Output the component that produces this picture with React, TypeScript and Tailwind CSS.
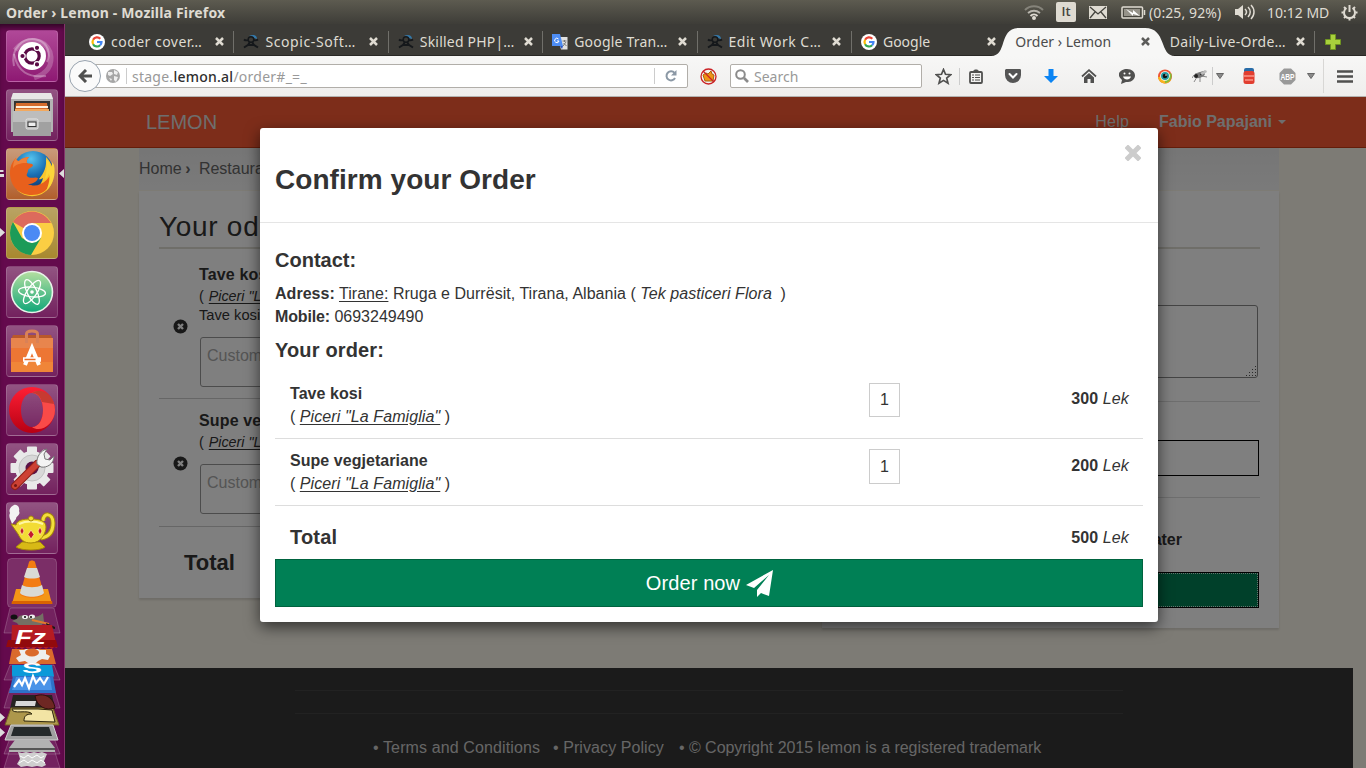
import type { ReactNode } from 'react';

const UI = "font-['Noto_Sans',sans-serif]";

/* ---------- Launcher ---------- */

function Tile({ children, tint = 'from-white/30 to-white/10' }: { children: ReactNode; tint?: string }) {
  return (
    <div className={`h-[52px] w-[52px] shrink-0 overflow-hidden rounded-[4px] border border-white/15 bg-linear-to-b ${tint}`}>
      <svg viewBox="0 0 52 52" className="-m-px h-[52px] w-[52px]">{children}</svg>
    </div>
  );
}

function Launcher() {
  return (
    <aside className="relative flex w-[65px] shrink-0 flex-col items-start gap-[7px] overflow-hidden border-r border-[#84336b] bg-[#640a4d] pt-[6px] pl-[6px] shadow-[inset_0_5px_5px_-2px_rgba(0,0,0,0.5)]">
      <Tile tint="from-[#b04898] to-[#8e1873]">
        <path d="M8 36C4 18 18 6 32 10c10 3 13 14 9 22" fill="none" stroke="#fff" strokeOpacity=".3" strokeWidth="2" />
        <path d="M9 20C20 6 38 8 44 22c4 14-4 22-16 26" fill="none" stroke="#fff" strokeOpacity=".22" strokeWidth="5" />
        <path d="M8 24c4 18 14 24 32 22" fill="none" stroke="#fff" strokeOpacity=".3" strokeWidth="2" />
        <circle cx="26" cy="26" r="14" fill="#fff" />
        <circle cx="26" cy="26" r="7.2" fill="none" stroke="#5a0a45" strokeWidth="3.2" />
        <g fill="#5a0a45" stroke="#fff" strokeWidth="1.2"><circle cx="16.5" cy="26" r="2.7" /><circle cx="31" cy="17.8" r="2.7" /><circle cx="31" cy="34.4" r="2.7" /></g>
      </Tile>
      <Tile>
        <path d="M7 4h38l2 6v33H5V10z" fill="#b4b4b4" /><path d="M7 4h38l2 6H5z" fill="#e8e8e6" />
        <path d="M8 12h36v10H8z" fill="#333" /><path d="M10 14h31l1 8H9z" fill="#d56c2c" /><path d="M10 17h32v2H10z" fill="#fff1df" /><path d="M9 20h34v2H9z" fill="#f2a95f" />
        <path d="M7 22h38v25H7z" fill="#a1a1a1" /><path d="M7 22h38v11H7z" fill="#bdbdbd" />
        <rect x="20" y="30" width="12" height="10" rx="1.5" fill="#bbb" stroke="#e5e5e5" /><rect x="22" y="33" width="8" height="4.5" fill="#eee" stroke="#333" />
      </Tile>
      <Tile tint="from-[#c99b7a] to-[#b15f2c]">
        <defs><radialGradient id="globe" cx=".45" cy=".2" r=".8"><stop stopColor="#55c3ee" /><stop offset=".5" stopColor="#1a6fb3" /><stop offset="1" stopColor="#0a2f66" /></radialGradient></defs>
        <circle cx="27" cy="23" r="20" fill="url(#globe)" />
        <path d="M40 9c10 10 10 26 0 34-6 6-20 8-29-1 16 4 24-3 26-12-3 2-4 1-4 1 5-6 8-12 7-22z" fill="#f9c52c" />
        <path d="M47 18c3 16-6 29-21 29C12 47 4 37 4 25c0-8 3-12 6-15 0 2 1 3 3 3 3-3 7-4 10-4-2 2-3 4-2 6 2 1 5 0 6 2 0 2-4 3-5 5 0 3-2 4-1 6 4 4 8 0 11 2-1 4-6 6-10 6 10 5 23-3 25-18z" fill="#e8601c" />
        <path d="M48 17c2 10-1 20-8 26 3-7 4-12 3-18-1 3-2 5-4 6 2-8 2-14 1-20 3 3 4 5 5 8 1-1 1-2 1-5z" fill="#fbd53a" />
        <path d="M10 10c0 2 1 3 3 3 3-3 7-4 10-4-2 2-3 4-2 6-4 0-10 0-14 5 0-4 1-8 3-10z" fill="#f08038" />
      </Tile>
      <Tile tint="from-[#b9a363] to-[#a8892e]">
        <circle cx="26" cy="26" r="22" fill="#fbce43" />
        <path d="M26 26 7 15a22 22 0 0 1 38 1H26z" fill="#dd6a5c" />
        <path d="M7 15a22 22 0 0 0 18 33l10-17-9 5-10-5z" fill="#1c9b58" />
        <circle cx="26" cy="26" r="10" fill="#fff" /><circle cx="26" cy="26" r="8" fill="#4b8af4" />
      </Tile>
      <Tile>
        <defs><linearGradient id="atom" x2="0" y2="1"><stop stopColor="#b5dfa0" /><stop offset="1" stopColor="#10a678" /></linearGradient></defs>
        <circle cx="26" cy="26" r="20.5" fill="url(#atom)" stroke="#e9f3ea" strokeWidth="1.6" />
        <g fill="none" stroke="#fff" strokeWidth="1.3"><ellipse cx="26" cy="26" rx="13.5" ry="4.8" transform="rotate(6 26 26)" /><ellipse cx="26" cy="26" rx="13.500" ry="4.8" transform="rotate(64 26 26)" /><ellipse cx="26" cy="26" rx="13.500" ry="4.8" transform="rotate(-56 26 26)" /></g><circle cx="26" cy="26" r="1.800" fill="#fff" />
      </Tile>
      <Tile>
        <path d="m7 10 38 0 2 5H5z" fill="#b9582b" /><path d="M5 13h42v34H5z" fill="#ed7634" /><path d="M5 13h42v10H5z" fill="#e8854d" /><path d="M5 37h42v10H5z" fill="#f08538" />
        <path d="M20.500 18V9c0-4 11-4 11 0v9" fill="none" stroke="#d98157" strokeWidth="3" />
        <path d="m19 40 7-17 7 17" fill="none" stroke="#fff" strokeWidth="4" /><path d="M17 34.500h18" stroke="#fff" strokeWidth="4.500" /><path d="M18.500 34.500h11" stroke="#e96b2a" strokeWidth="1.600" />
      </Tile>
      <Tile>
        <defs><linearGradient id="opera" x2="0" y2="1"><stop stopColor="#ff1f35" /><stop offset="1" stopColor="#b70013" /></linearGradient></defs>
        <path fillRule="evenodd" d="M26 3a23 23 0 1 0 0 46 23 23 0 0 0 0-46zm0 6c7 0 11 8 11 17s-4 17-11 17-11-8-11-17S19 9 26 9z" fill="url(#opera)" />
        <path d="M26 9c8-6 23 2 23 17S34 49 26 43c7 0 11-8 11-17S33 9 26 9z" fill="#f94a48" /><path d="M26 9c8-6 20 0 22 11l-12-2c-2-6-5-9-10-9z" fill="#c73a31" />
      </Tile>
      <Tile>
        <g transform="translate(26 25)"><g fill="#e9e9e9">{[0, 45, 90, 135].map((a) => <rect key={a} x="-5" y="-21.5" width="10" height="43" rx="1" transform={`rotate(${a})`} />)}<circle r="17" /></g><circle r="13" fill="#d8d8d8" stroke="#c2c2c2" /><circle r="6.5" fill="#5a1248" /></g>
        <path d="m9 43 22-22" stroke="#8f1f17" strokeWidth="8" strokeLinecap="round" /><path d="m9 43 22-22" stroke="#cd4134" strokeWidth="6" strokeLinecap="round" />
        <path d="M31 21c-1-7 4-14 10-15l-3 5 1 5 5 1 4-4c0 8-7 12-13 11z" fill="#f4f4f4" stroke="#777" /><circle cx="9.500" cy="42.500" r="1.500" fill="#731611" />
      </Tile>
      <Tile>
        <path d="M6 22c-1-4-4-7-2-11-2-4 2-7 4-8 4-1 6 3 5 6 2 4-3 5-3 8z" fill="#f3f3f3" />
        <path d="M37 19c0-9 10-8 10 2s-5 14-12 15" fill="none" stroke="#a58709" strokeWidth="5" /><path d="M37 19c0-9 10-8 10 2s-5 14-12 15" fill="none" stroke="#f3de3c" strokeWidth="3" />
        <path d="M16 40h18l5 5c-4 4-24 4-29 0z" fill="#d8b916" stroke="#a58709" />
        <path d="M12 32 5 22l5 1c1-5 7-6 15-6 9 0 15 2 15 8s-5 16-15 16c-7 0-10-3-13-9z" fill="#f2dc35" stroke="#a58709" /><path d="M13 22c7-3 16-3 24 0" stroke="#fff7a6" strokeWidth="2" fill="none" /><circle cx="25" cy="16.500" r="2.500" fill="#f2dc35" stroke="#a58709" />
        <g fill="#c4182f" stroke="#fff3a0" strokeWidth=".7"><path d="m16 25 2 4-2 4-2-4zM25 28l3 4.500-3 4.500-3-4.500zM34 25l2 4-2 4-2-4z" /></g>
      </Tile>
      <div className="-mt-[3px] ml-px">
        <svg width="50" height="50" viewBox="0 0 50 50"><rect x=".5" y=".5" width="49" height="49" rx="4" fill="#fff" fillOpacity=".15" stroke="#fff" strokeOpacity=".18" />
          <path d="M9 31h32l4 15H5z" fill="#f49616" /><path d="M5 43h40l.5 3H4.500z" fill="#d96300" /><path d="M13 36 22 4c1-2 5-2 6 0l9 32c-3 5-21 5-24 0z" fill="#f37c12" /><path d="m20 10-3 9c4 2 12 2 16 0l-3-9zM15 27l-2 8c4 5 20 5 24 0l-2-8c-5 3-15 3-20 0z" fill="#d9dad5" />
        </svg>
      </div>
      <svg width="65" height="160" viewBox="0 608 65 160" className="absolute top-[584px] left-0">
        <g fill="#fff" fillOpacity=".1" stroke="#fff" strokeOpacity=".2"><path d="m10 608 44 0 6 25H4zM10 665h44l6 15H4zM10 688h44l6 20H4zM10 738h44l6 16H4zM10 749h44l6 19H4z" /></g>
        <path d="M18 618c1-4 7-3 14-1 4 0 8-1 11-4l1 9c-5 9-23 8-27 1l-5-2z" fill="#746f64" /><ellipse cx="14" cy="617" rx="3.500" ry="2.500" fill="#111" /><ellipse cx="25" cy="617" rx="3" ry="2" fill="#eee" /><ellipse cx="32" cy="616.500" rx="3" ry="2" fill="#eee" /><circle cx="25" cy="617" r="1" /><circle cx="31" cy="617" r="1" /><path d="m32 620 17 4" stroke="#e07a2d" strokeWidth="2" /><path d="m46 623 9 4v2l-8-2z" fill="#1d1714" />
        <path d="m12 625 40 0 5 23-3-1-2 2-3-2-3 2-3-2-3 2-3-2-3 2-3-2-3 2-3-2-3 2-3-2-3 2-3-2-2 1z" fill="#b51b22" /><path d="M8 640h48l2 7H6z" fill="#920a0d" />
        <text x="15" y="644" fill="#fff" fontFamily="Liberation Sans, sans-serif" fontWeight="bold" fontStyle="italic" fontSize="21" textLength="31" lengthAdjust="spacingAndGlyphs">Fz</text>
        <path d="M12 649h40l4 15H9z" fill="#da6a2c" /><path d="M19 650h5l2-1h12l2 1h6v4l4 2-2 4-6-1-4 2-2 2H28l-3-2-6 1-3-4 5-3z" fill="#eee" /><ellipse cx="32" cy="652.500" rx="7" ry="4" fill="#da6a2c" />
        <path d="M12 665h40l2 11c-2 4-5 2-7 2H17c-4 2-5-2-5-4z" fill="#0b99d9" /><text x="22" y="673" fill="#fff" fontFamily="Liberation Sans, sans-serif" fontWeight="bold" fontSize="14" textLength="20" lengthAdjust="spacingAndGlyphs">S</text>
        <path d="M13 676h40l3 17H9z" fill="#2d72c9" /><path d="M16 677h34l2 13H12z" fill="#4993e8" /><path d="m14 687 5-7 3 5 3-7 4 10 4-12 3 7 4-5 4 6 4-7" fill="none" stroke="#fff" strokeWidth="2.200" />
        <path d="M13 695h39l3 14H10z" fill="#252321" /><path d="M16 701h20l-1 5H15z" fill="#d7d7d7" />
        <path d="M11 708h42l6 17H5z" fill="#ad974b" stroke="#776322" /><path d="M12 709c0 6 17 0 20 5-6 0-8 2-8 7l31 1-3-12-14-1z" fill="#f2e4a4" stroke="#2b240c" />
        <path d="M35 696c11-4 19 3 20 12-9 3-18-1-20-12z" fill="#6e2723" stroke="#2e0d0c" />
        <path d="M11 725h42l5 15H5z" fill="#a0a0a0" stroke="#d2d2d2" /><path d="M14 727h35l3 9H11z" fill="#252a2b" />
        <path d="M15 740h34l6 8v4H9v-4z" fill="#b2b2b2" /><path d="M9 748h46v2H9z" fill="#555" />
        <path d="m18 752 4 1 4-1 4 1 4-1 4 1 4-1 5 2-3 7 2 4-4 2-5-1-5 1-5-1-6 1-4-3 3-5z" fill="#cfcfcf" /><path d="m20 756 4 2 4-3 4 3 5-3 4 3 3-2M19 763l5-3 4 3 4-3 5 3 4-3 4 3" stroke="#fff" fill="none" />
      </svg>
      <svg width="65" height="744" viewBox="0 24 65 744" className="absolute top-0 left-0" fill="#ddd">
        <path d="M0 170h3l1 1-1 1H0zM0 174h4v3H0zM64 169v9l-5-4.500zM0 228l5 4.500-5 4.500zM0 713l5 4.500-5 4.500zM0 728l5 4.500-5 4.500z" />
      </svg>
    </aside>
  );
}

/* ---------- System bar ---------- */

function SystemBar() {
  return (
    <header className={`flex h-6 shrink-0 items-center bg-linear-to-b from-[#5d5b50] to-[#3e3d38] text-[#dfdbd2] ${UI}`}>
      <span className="ml-[6px] text-[14px] font-bold tracking-[0.180px]">Order › Lemon - Mozilla Firefox</span>
      <div className="ml-auto flex items-center text-[14px]">
        <svg width="20" height="16" viewBox="0 0 20 16" fill="none" strokeWidth="2" className="mr-[12px]"><path d="M1 6c5-5 13-5 18 0" stroke="#85837a" /><path d="M4 9c4-3 8-3 12 0" stroke="#b9b6ae" /><path d="M6.500 12c2-2 5-2 7 0" stroke="#dfdbd2" /><circle cx="10" cy="14" r="1" stroke="#dfdbd2" /></svg>
        <span className="mr-[13px] flex h-5 w-5 items-center justify-center rounded-[2px] bg-[#dfdbd2] font-['Open_Sans',sans-serif] text-[13px] font-semibold text-[#45443e]">It</span>
        <svg width="18" height="13" viewBox="0 0 18 13" className="mr-[14px]"><rect width="18" height="13" fill="#dfdbd2" /><path d="m1 1 8 7 8-7M1 12l5-6M17 12l-5-6" stroke="#45443e" fill="none" strokeWidth="1.300" /></svg>
        <svg width="25" height="13" viewBox="0 0 25 13" className="mr-[3px]"><rect x="1" y="1" width="20.500" height="11" rx="1" fill="none" stroke="#dfdbd2" strokeWidth="1.500" /><path d="M23.500 4v5" stroke="#dfdbd2" strokeWidth="1.500" /><path d="M3 3h16v7H3z" fill="#96938a" /><path d="m5 3 7 4V4l7 6-7-2v2z" fill="#fff" /></svg>
        <span className="w-[74px] text-[14px] tracking-[0.100px] whitespace-nowrap">(0:25, 92%)</span>
        <svg width="21" height="16" viewBox="0 0 21 16" className="mr-[12px] ml-[11px]"><path d="M1 5h3l5-4v14l-5-4H1z" fill="#dfdbd2" /><path d="M11 5c2 2 2 4 0 6M14 3c3 3 3 7 0 10M17 1c4 4 4 10 0 14" stroke="#dfdbd2" fill="none" strokeWidth="1.500" /></svg>
        <span className="w-[61px] tracking-[0px] whitespace-nowrap">10:12 MD</span>
        <svg width="17" height="17" viewBox="0 0 17 17" className="mr-[8px] ml-[13px]" stroke="#dfdbd2" fill="none"><path d="M5.500 4a5.500 5.500 0 1 0 6 0" strokeWidth="2" /><path d="M8.500 1v7" strokeWidth="2" /><path d="M.5 8.500h2M14.500 8.500h2M3 3l1.500 1.500M14 3l-1.500 1.500M3 14l1.500-1.500M14 14l-1.500-1.500M8.500 14v2.500" strokeWidth="2" /></svg>
      </div>
    </header>
  );
}

/* ---------- Browser tabs ---------- */

function GoogleMark() {
  return <svg width="16" height="16" viewBox="0 0 16 16"><circle cx="8" cy="8" r="8" fill="#fff" /><g fill="none" strokeWidth="2.200"><path d="M11.300 4.700A4.500 4.500 0 0 0 4.100 5.800" stroke="#ea4335" /><path d="M4.100 5.800a4.500 4.500 0 0 0 0 4.400" stroke="#fbbc05" /><path d="M4.100 10.200a4.500 4.500 0 0 0 7 1.100" stroke="#34a853" /><path d="M11.100 11.300A4.500 4.500 0 0 0 12.500 8H8" stroke="#4285f4" /></g></svg>;
}
function PersonMark() {
  return <svg width="16" height="14" viewBox="0 0 16 14"><path d="M6 1c4-2 8-1 8 3l-3-1z" fill="#3478a8" /><path d="M1 4.500c2 2 4 .5 7 .5s5 1 7-.5" fill="none" stroke="#15181b" strokeWidth="1.800" /><path d="M1 12.500l4-2.500h6l4 2.500M5 10l2-3h2l2 3" fill="none" stroke="#15181b" strokeWidth="2" /><circle cx="8" cy="4.500" r="2.800" fill="#3c3b37" stroke="#15181b" strokeWidth="1.500" /></svg>;
}
function TranslateMark() {
  return <svg width="16" height="16" viewBox="0 0 16 16"><path d="M6 3h9.500v12.500H9z" fill="#e1e1e1" /><path d="M0 0h8l3 12H0z" fill="#4d8df5" /><path d="M8 12h3l-1 3z" fill="#2a56c6" /><path d="M6.500 5A2.200 2.200 0 1 0 7 7H5" stroke="#fff" fill="none" /><path d="M10.500 7h4M12.500 6v2M11 12l3-4M11.500 9l3 3" stroke="#777" fill="none" /></svg>;
}
function TabClose({ dark = false }: { dark?: boolean }) {
  return <svg width="9" height="9" viewBox="0 0 9 9" className="mr-[10.500px] ml-auto shrink-0"><path d="m1 1 7 7M8 1 1 8" stroke={dark ? '#5c5c5a' : '#dfdbd2'} strokeWidth="2.500" /></svg>;
}

const tabs: { icon?: ReactNode; title: string; active?: boolean; bar?: boolean; fit: string }[] = [
  { icon: <GoogleMark />, title: 'coder cover…', bar: true, fit: 'tracking-[0.480px]' },
  { icon: <PersonMark />, title: 'Scopic-Soft…', bar: true, fit: 'tracking-[0.600px]' },
  { icon: <PersonMark />, title: 'Skilled PHP|…', bar: true, fit: 'tracking-[0.200px]' },
  { icon: <TranslateMark />, title: 'Google Tran…', bar: true, fit: 'tracking-[0.200px]' },
  { icon: <PersonMark />, title: 'Edit Work C…', bar: true, fit: 'tracking-[0.500px]' },
  { icon: <GoogleMark />, title: 'Google', fit: 'tracking-[0px]' },
  { title: 'Order › Lemon', active: true, fit: 'tracking-[0px]' },
  { title: 'Daily-Live-Orde…', bar: true, fit: 'tracking-[0.300px]' },
];

function TabStrip() {
  return (
    <div className={`flex h-8 shrink-0 border-b border-[#292825] bg-[#3c3b37] pl-[15px] text-[14px] text-[#dfdbd2] ${UI}`}>
      {tabs.map((t) => (
        <div key={t.title} className="relative flex w-[154.400px] shrink-0 items-center pt-1 pl-[9px]">
          {t.active && (
            <svg width="184" height="29" viewBox="0 0 184 29" className="absolute top-[3px] -left-[15px]"><path d="M0 29c17 0 7-28 28-28h126c22 0 14 28 30 28z" fill="#f7f7f6" /></svg>
          )}
          {t.icon && <span className="mr-[6px] flex w-4">{t.icon}</span>}
          <span className={`relative whitespace-nowrap ${t.fit} ${t.active ? 'text-[#4c4c4c]' : ''}`}>{t.title}</span>
          <span className="relative ml-auto flex"><TabClose dark={t.active} /></span>
          {t.bar && <i className="absolute top-[7px] right-0 h-[22px] w-px bg-[#706f6a]" />}
        </div>
      ))}
      <svg width="16" height="16" viewBox="0 0 16 16" className="mt-[10px] ml-[10px]"><path d="M5.500.5h5v5h5v5h-5v5h-5v-5h-5v-5h5z" fill="#a8d13c" stroke="#6f9420" /></svg>
    </div>
  );
}

/* ---------- Browser toolbar ---------- */

function Cell({ w, children }: { w: string; children: ReactNode }) {
  return <span className={`flex shrink-0 items-center justify-center ${w}`}>{children}</span>;
}
const Caret = () => <svg width="8" height="6" viewBox="0 0 8 6"><path d="M.5.5h7L4 5.500z" fill="#8a8a8a" stroke="#666" /></svg>;

function Toolbar() {
  return (
    <div className={`flex h-[41px] shrink-0 items-center border-b border-[#b3b2b0] bg-linear-to-b from-[#f7f7f6] to-[#efeeed] ${UI}`}>
      <span className="relative z-10 ml-1 flex h-8 w-8 items-center justify-center rounded-full border border-[#98a3af] bg-[#fafafa]">
        <svg width="14" height="14" viewBox="0 0 14 14" fill="none" stroke="#50504f" strokeWidth="3"><path d="M8 1 2 7l6 6M2 7h12" /></svg>
      </span>
      <div className="-ml-[6px] flex h-6 w-[593px] items-center rounded-r-[2px] border border-[#b1aea9] bg-white pl-[10px]">
        <svg width="14" height="14" viewBox="0 0 14 14"><circle cx="7" cy="7" r="7" fill="#a6a6a6" /><path d="M2 3h4l1 2-3 2-2-1zM8 1l4 2-1 3-3-1zM8 7l4 1-2 5-2-2zM3 9l3 1-1 2z" fill="#eee" /></svg>
        <i className="mr-[5px] ml-[6px] h-4 w-px bg-[#ccc]" />
        <span className="text-[14px] tracking-[0.250px] whitespace-nowrap text-[#999]">stage.<b className="font-medium text-[#2e2e2e]">lemon.al</b>/order#_=_</span>
        <i className="ml-auto h-4 w-px bg-[#ccc]" />
        <Cell w="w-8"><svg width="12" height="12" viewBox="0 0 12 12"><path d="M10 8a4.500 4.500 0 1 1-.5-5" fill="none" stroke="#8b98a5" strokeWidth="2" /><path d="M11.500 0v5.500H6z" fill="#8b98a5" /></svg></Cell>
      </div>
      <Cell w="w-[42px] pr-px"><svg width="17" height="17" viewBox="0 0 17 17"><path d="m3 7 3-2 2 1 3-3 1 3 2 1-1 6H5z" fill="#ef9416" stroke="#a96410" /><circle cx="8.500" cy="8.500" r="7.500" fill="none" stroke="#cb2226" strokeWidth="1.300" /><path d="m3 3 11 11" stroke="#cb2226" strokeWidth="1.300" /></svg></Cell>
      <div className="flex h-6 w-[192px] shrink-0 items-center rounded-[2px] border border-[#b1aea9] bg-white pl-[4px] text-[14px] text-[#999]">
        <svg width="14" height="14" viewBox="0 0 14 14" className="mr-[5px]" fill="none" stroke="#8b8b8b"><circle cx="5.500" cy="5.500" r="4.300" strokeWidth="2" /><path d="m9 9 4 4" strokeWidth="2.600" /></svg>Search
      </div>
      <span className="w-[5px] shrink-0" />
      <Cell w="w-8"><svg width="17" height="17" viewBox="0 0 17 17"><path d="m8.500 1.500 2 4.800 5.200.4-4 3.400 1.300 5.100-4.500-2.800L4 15.200l1.300-5.100-4-3.400 5.200-.4z" fill="none" stroke="#50504f" strokeWidth="1.700" /></svg></Cell>
      <i className="h-[17px] w-px bg-[#ccc]" />
      <Cell w="mr-[3px] w-[31px]"><svg width="14" height="15" viewBox="0 0 14 15"><rect x="1" y="3" width="12" height="11" rx="1" fill="none" stroke="#50504f" strokeWidth="1.800" /><path d="m4 3 1.500-2h3L10 3z" fill="#50504f" stroke="#50504f" /><path d="M3 6h2M6 6h5M3 8.500h2M6 8.500h5M3 11h2M6 11h5" stroke="#50504f" strokeWidth="1.200" /></svg></Cell>
      <Cell w="w-[38px]"><svg width="16" height="14" viewBox="0 0 16 14"><path d="M1 0h14c1 0 1 1 1 2v4a8 8 0 0 1-16 0V1z" fill="#555" /><path d="m4.500 5 3.500 3.500L11.500 5" stroke="#fff" strokeWidth="2" fill="none" strokeLinecap="round" /></svg></Cell>
      <Cell w="w-[38px]"><svg width="14" height="14" viewBox="0 0 14 14"><path d="M4.500 0h5v7H14l-7 7-7-7h4.500z" fill="#0b84f3" /></svg></Cell>
      <Cell w="w-[38px]"><svg width="16" height="14" viewBox="0 0 16 14"><path d="m1 7.500 7-6.300 7 6.300" fill="none" stroke="#50504f" strokeWidth="1.800" /><path d="m3 8.500 5-4.500 5 4.500V14H9.500v-4h-3v4H3z" fill="#50504f" /></svg></Cell>
      <Cell w="w-[38px]"><svg width="16" height="15" viewBox="0 0 16 15"><path d="M8 0c5 0 8 3 8 6.500S13 13 9 13H7l-5 2 1-4C-4 5 2 0 8 0z" fill="#50504f" /><path d="M4 7.500c1 4 7 4 8 0z" fill="#fff" /><circle cx="5.500" cy="4.500" r="1" fill="#fff" /><circle cx="10.500" cy="4.500" r="1" fill="#fff" /></svg></Cell>
      <Cell w="w-[38px]"><svg width="14" height="15" viewBox="0 0 14 15"><circle cx="7" cy="7.500" r="7" fill="#ee5334" /><path d="M0 8a7 7 0 0 0 13 3L7 7z" fill="#f8b420" /><path d="M13 4a7 7 0 0 1-6 10V7z" fill="#84bd39" /><circle cx="7" cy="7" r="4.800" fill="#fff" /><circle cx="7" cy="7" r="4" fill="#249aa0" /><circle cx="7" cy="7" r="2.300" fill="#111" /><circle cx="8" cy="6" r=".8" fill="#fff" /></svg></Cell>
      <Cell w="w-[28px] pl-1"><svg width="16" height="14" viewBox="0 0 16 14"><path d="m3 5 10-3M4 6l11 2M5 8l-3 5M8 8v5M2 6l-2 3" stroke="#888" /><ellipse cx="8" cy="6" rx="5" ry="2.600" fill="#777" transform="rotate(-20 8 6)" /><circle cx="4" cy="7" r="2" fill="#222" /><circle cx="9" cy="5" r="1.200" fill="#333" /><path d="m8 4 6-3 1 2-5 3z" fill="#bbb" /></svg></Cell>
      <i className="h-[18px] w-px bg-[#ccc]" />
      <Cell w="mr-[2px] w-[15px] pr-[2px]"><Caret /></Cell>
      <Cell w="w-[38px]"><svg width="12" height="16" viewBox="0 0 12 16"><rect x="1" y="0" width="10" height="5" rx="2" fill="#286ca8" /><rect x=".5" y="3" width="11" height="13" rx="2.500" fill="#e13e30" /><path d="M1 8h10M2 12h8" stroke="#fa9588" strokeWidth="1.300" /></svg></Cell>
      <Cell w="w-[38px]"><svg width="17" height="17" viewBox="0 0 17 17"><path d="M5 .5h7L16.500 5v7L12 16.500H5L.5 12V5z" fill="#999" /><text x="8.500" y="11.500" fill="#fff" fontFamily="Liberation Sans, sans-serif" fontSize="8.500" fontWeight="bold" textAnchor="middle" textLength="14" lengthAdjust="spacingAndGlyphs">ABP</text></svg></Cell>
      <Cell w="mr-[7px] w-[10px]"><Caret /></Cell>
      <i className="h-[34px] w-px bg-[#d8d7d5]" />
      <Cell w="w-[42px]"><svg width="16" height="13" viewBox="0 0 16 13"><path d="M0 1.500h16M0 6.500h16M0 11.500h16" stroke="#50504f" strokeWidth="2.400" /></svg></Cell>
    </div>
  );
}

/* ---------- Order page ---------- */

const dishes = [
  { name: 'Tave kosi', note: 'Tave kosi', qty: 1, price: 300, row: 'h-[150px] pt-[15px]', box: 'mt-3', qtyBox: 'mt-px h-[34px]' },
  { name: 'Supe vegjetariane', note: '', qty: 1, price: 200, row: 'h-[128px] pt-[11px]', box: 'mt-3', qtyBox: 'h-[35px] pt-px' },
];

function CartPanel() {
  return (
    <section className="h-[407px] w-[663px] bg-white px-5 pt-5 shadow-[0_2px_2px_rgba(0,0,0,0.12)]">
      <h2 className="h-[38px] border-b-2 border-[#dedcd2] text-[28px] leading-[32px] tracking-[0.700px] text-[#333]">Your oders</h2>
      {dishes.map((d) => (
        <div key={d.name} className={`flex border-b border-[#ccc] text-[#333] ${d.row}`}>
          <div className="flex w-10 items-center pb-[9px] pl-[14px]">
            <svg width="15" height="15" viewBox="0 0 15 15"><circle cx="7.500" cy="7.500" r="7" fill="#303030" /><path d="m5 5 5 5M10 5l-5 5" stroke="#fff" strokeWidth="2.400" /></svg>
          </div>
          <div className="flex-1">
            <div className="h-[22px] text-[16px] leading-[22px] font-bold tracking-[0.150px]">{d.name}</div>
            <div className="h-5 text-[14.300px] leading-[21px]">( <i className="ml-[1px] underline underline-offset-2">Piceri "La Famiglia"</i> )</div>
            {d.note && <div className="h-[19px] text-[14.700px] leading-[18px]">{d.note}</div>}
            <div className={`ml-px h-[50px] w-[400px] rounded-[3px] border border-[#999] px-[6px] pt-1 text-[16px] leading-7 text-[#aaa] ${d.box}`}>Custom request</div>
          </div>
        </div>
      ))}
      <div className="pt-[21px] pl-[25px] text-[22px] leading-[30px] font-bold text-[#333]">Total</div>
    </section>
  );
}

function CheckoutPanel() {
  return (
    <section className="ml-auto flex h-[437px] w-[457px] flex-col bg-white pr-[19px] pl-5 shadow-[0_2px_2px_rgba(0,0,0,0.12)]">
      <div className="h-[58px] shrink-0 border-b-2 border-[#dedcd2]" />
      <div className="mt-[56px] mr-[2px] flex h-[73px] shrink-0 items-end justify-end rounded-[3px] border border-[#888]">
        <svg width="11" height="11" viewBox="0 0 11 11" className="mr-px mb-px" stroke="#555" strokeDasharray="1 2"><path d="M1 10.500h10M4 7.500h7M7 4.500h4M10 1.500h1" /></svg>
      </div>
      <div className="mt-[23px] h-px shrink-0 bg-[#ddd]" />
      <div className="mt-[38px] mr-px h-9 shrink-0 border border-black" />
      <div className="mt-[21px] h-px shrink-0 bg-[#ddd]" />
      <div className="mt-[30px] h-6 shrink-0 pr-[78px] text-right text-[16px] font-bold text-[#333]">Pay later</div>
      <div className="mt-5 mr-px h-9 shrink-0 border border-black bg-[#008055]"><div className="h-full border border-dotted border-white/80" /></div>
    </section>
  );
}

function Page() {
  return (
    <div className="flex h-full flex-col bg-[#faf6ea]">
      <nav className="flex h-[51px] shrink-0 items-center border-b border-[#c93a15] bg-[#fa5a34] pl-[81px] text-[16px] text-[#ddd]">
        <span className="text-[20px]">LEMON</span>
        <span className="ml-auto tracking-[0.200px]">Help</span>
        <b className="ml-[30px]">Fabio Papajani</b>
        <svg width="8" height="4" viewBox="0 0 8 4" className="mr-[80px] ml-[6px]"><path d="M0 0h8L4 4z" fill="#ddd" /></svg>
      </nav>
      <div className="ml-[74px] w-[1140px]">
        <div className="h-[42px] bg-linear-to-b from-[#ececec] to-[#f5f5f5] text-[16px] leading-[41px] text-[#666]">Home <span className="mr-[4px] -ml-px font-bold">›</span> Restaurants</div>
        <div className="mt-px flex items-start"><CartPanel /><CheckoutPanel /></div>
      </div>
      <footer className="mt-auto mr-[13px] h-[100px] shrink-0 bg-[#363636] pl-[230px] text-[16px] text-[#ccc]">
        <div className="mt-[22px] h-px w-[828px] bg-[#444]" />
        <div className="mt-[22px] h-px w-[828px] bg-[#444]" />
        <div className="mt-[22px] flex pl-[78px] leading-6 whitespace-nowrap"><span className="w-[180px] tracking-[0.120px]">• Terms and Conditions</span><span className="w-[126px] tracking-[0.080px]">• Privacy Policy</span><span className="tracking-[-0.040px]">• © Copyright 2015 lemon is a registered trademark</span></div>
      </footer>
    </div>
  );
}

function Price({ value }: { value: number }) {
  return <span className="ml-auto pr-[14px] tracking-[0.120px]"><b>{value}</b> <i>Lek</i></span>;
}

function ConfirmDialog() {
  return (
    <div className="flex h-[494px] w-[898px] flex-col rounded-[3px] bg-white text-[16px] leading-[23px] text-[#333] shadow-[0_5px_15px_rgba(0,0,0,0.600)]">
      <div className="flex h-[95px] shrink-0 justify-between border-b border-[#e5e5e5] pr-[17px] pl-[15px]">
        <h1 className="pt-8 text-[28px] leading-10 font-bold tracking-[0.050px]">Confirm your Order</h1>
        <svg width="16" height="16" viewBox="0 0 16 16" className="mt-[17px]"><path d="m3 3 10 10M13 3 3 13" stroke="#ccc" strokeWidth="5" strokeLinecap="square" strokeLinejoin="round" /></svg>
      </div>
      <div className="px-[15px] pt-[22px]">
        <h2 className="h-[30px] text-[20px] leading-[30px] font-bold">Contact:</h2>
        <p className="mt-[7px] tracking-[0.030px]"><b>Adress:</b> <span className="underline underline-offset-2">Tirane:</span> Rruga e Durrësit, Tirana, Albania ( <i className="mr-1 tracking-[0.080px]">Tek pasticeri Flora</i> )</p>
        <p><b className="tracking-[-0.150px]">Mobile:</b> 0693249490</p>
        <h2 className="mt-[7px] mb-[7px] h-[30px] text-[20px] leading-[30px] font-bold tracking-[0.150px]">Your order:</h2>
        {dishes.map((d) => (
          <div key={d.name} className="flex h-[67px] items-start border-b border-[#ddd] pt-[10px] pl-[15px]">
            <div className="w-[579px]"><b className="tracking-[0.050px]">{d.name}</b><br />( <i className="tracking-[0.100px] underline underline-offset-2">Piceri "La Famiglia"</i> )</div>
            <div className={`w-[31px] border border-[#ccc] text-center leading-[32px] ${d.qtyBox}`}>{d.qty}</div>
            <div className="ml-auto pt-[5px]"><Price value={d.price} /></div>
          </div>
        ))}
        <div className="flex h-[53px] items-center pt-[9px] pl-[15px]"><b className="text-[20px] tracking-[0.200px]">Total</b><Price value={500} /></div>
        <button className="flex h-12 w-full items-center justify-center gap-[6px] border border-[#00633f] bg-[#008055] pl-px text-[20px] tracking-[0.100px] text-white">
          Order now
          <svg width="27" height="27" viewBox="0 0 27 27" fill="#fff"><path d="M27 0 23 26 15 23 11 27V20L23 5 8 18 0 15z" /></svg>
        </button>
      </div>
    </div>
  );
}

export default function App() {
  return (
    <div className="flex h-[768px] w-[1366px] flex-col overflow-hidden font-['Liberation_Sans',sans-serif]">
      <SystemBar />
      <div className="flex min-h-0 flex-1">
        <Launcher />
        <div className="flex min-w-0 flex-1 flex-col">
          <TabStrip />
          <Toolbar />
          <main className="relative min-h-0 flex-1 overflow-hidden">
            <Page />
            <div className="absolute inset-0 bg-black/50 pt-[31px] pl-[195px]"><ConfirmDialog /></div>
          </main>
        </div>
      </div>
    </div>
  );
}
